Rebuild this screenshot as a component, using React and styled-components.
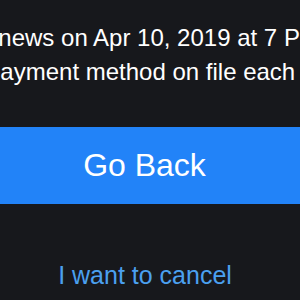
import React from 'react';
import styled, { createGlobalStyle } from 'styled-components';

const GlobalStyle = createGlobalStyle`
    html, body {
        margin: 0;
        padding: 0;
        background: #17181c;
    }
    body {
        font-family: "Liberation Sans", Arial, sans-serif;
        overflow: hidden;
    }
`;

export const Page = styled.div`
    display: flex;
    flex-direction: column;
    width: 300px;
    height: 300px;
    overflow: hidden;
    background: #17181c;
`;

export const Message = styled.div`
    display: flex;
    flex-direction: column;
    padding-top: 21px;
`;

export const MessageLine = styled.span`
    display: block;
    color: #ffffff;
    font-size: 24px;
    line-height: 34px;
    white-space: nowrap;
    margin-left: ${(props) => props.shift}px;
`;

export const BackButton = styled.button`
    margin-top: 38px;
    height: 77px;
    width: 100%;
    border: none;
    background: #2283f8;
    color: #ffffff;
    font-family: "Liberation Sans", Arial, sans-serif;
    font-size: 32px;
    line-height: 77px;
    padding: 0 11px 0 0;
`;

export const CancelLink = styled.a`
    display: block;
    margin-top: 56px;
    padding-right: 10px;
    color: #4ba0f0;
    font-size: 25px;
    line-height: 30px;
    text-align: center;
    text-decoration: none;
`;

const App = () => (
  <Page>
    <GlobalStyle />
    <Message>
      <MessageLine shift={-23}>renews on Apr 10, 2019 at 7 PM.</MessageLine>
      <MessageLine shift={-13}>payment method on file each month.</MessageLine>
    </Message>
    <BackButton>Go Back</BackButton>
    <CancelLink href="#">I want to cancel</CancelLink>
  </Page>
);

export default App;
